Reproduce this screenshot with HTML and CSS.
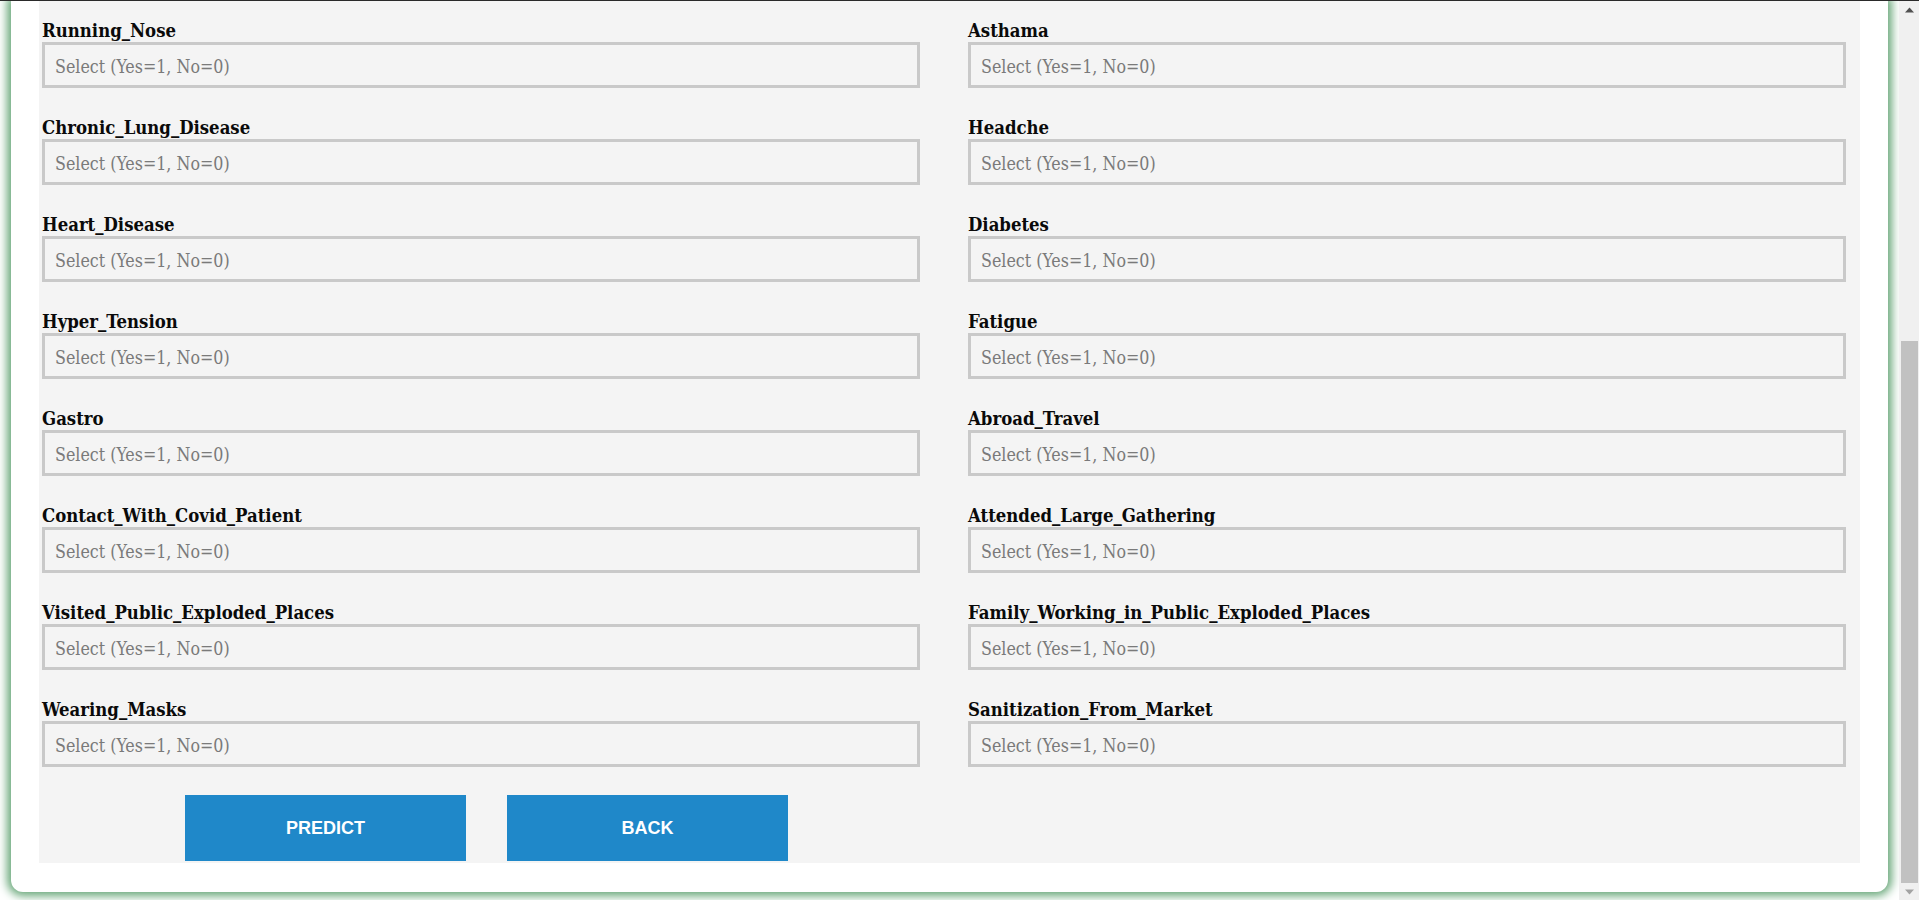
FILE: index.html
```html
<!DOCTYPE html>
<html>
<head>
<meta charset="utf-8">
<title>Covid Prediction</title>
<link rel="stylesheet" href="styles.css">
</head>
<body>
<div class="viewport">
  <div class="page">
    <div class="card">
      <form class="form">
        <div class="grid">
          <div class="field"><label>Running_Nose</label><input type="text" placeholder="Select (Yes=1, No=0)"></div>
          <div class="field"><label>Asthama</label><input type="text" placeholder="Select (Yes=1, No=0)"></div>
          <div class="field"><label>Chronic_Lung_Disease</label><input type="text" placeholder="Select (Yes=1, No=0)"></div>
          <div class="field"><label>Headche</label><input type="text" placeholder="Select (Yes=1, No=0)"></div>
          <div class="field"><label>Heart_Disease</label><input type="text" placeholder="Select (Yes=1, No=0)"></div>
          <div class="field"><label>Diabetes</label><input type="text" placeholder="Select (Yes=1, No=0)"></div>
          <div class="field"><label>Hyper_Tension</label><input type="text" placeholder="Select (Yes=1, No=0)"></div>
          <div class="field"><label>Fatigue</label><input type="text" placeholder="Select (Yes=1, No=0)"></div>
          <div class="field"><label>Gastro</label><input type="text" placeholder="Select (Yes=1, No=0)"></div>
          <div class="field"><label>Abroad_Travel</label><input type="text" placeholder="Select (Yes=1, No=0)"></div>
          <div class="field"><label>Contact_With_Covid_Patient</label><input type="text" placeholder="Select (Yes=1, No=0)"></div>
          <div class="field"><label>Attended_Large_Gathering</label><input type="text" placeholder="Select (Yes=1, No=0)"></div>
          <div class="field"><label>Visited_Public_Exploded_Places</label><input type="text" placeholder="Select (Yes=1, No=0)"></div>
          <div class="field"><label>Family_Working_in_Public_Exploded_Places</label><input type="text" placeholder="Select (Yes=1, No=0)"></div>
          <div class="field"><label>Wearing_Masks</label><input type="text" placeholder="Select (Yes=1, No=0)"></div>
          <div class="field"><label>Sanitization_From_Market</label><input type="text" placeholder="Select (Yes=1, No=0)"></div>
        </div>
        <div class="actions">
          <button type="button" class="btn">PREDICT</button>
          <button type="button" class="btn">BACK</button>
        </div>
      </form>
    </div>
  </div>
  <div class="scrollbar">
    <div class="sb-arrow">
      <svg width="9" height="6" viewBox="0 0 9 6"><path d="M0 5.5 L4.5 0.5 L9 5.5 Z" fill="#505050"/></svg>
    </div>
    <div class="sb-track"><div class="sb-thumb"></div></div>
    <div class="sb-arrow down">
      <svg width="9" height="6" viewBox="0 0 9 6"><path d="M0 0.5 L4.5 5.5 L9 0.5 Z" fill="#a3a3a3"/></svg>
    </div>
  </div>
</div>
</body>
</html>
```

FILE: styles.css
```css
html, body {
  margin: 0;
  padding: 0;
  height: 900px;
  overflow: hidden;
  background: #ffffff;
}

body {
  border-top: 1px solid #2a2a2a;
  box-sizing: border-box;
}

.viewport {
  display: flex;
  height: 899px;
}

.page {
  flex: 1;
  padding: 0 11px 8px 11px;
  display: flex;
  flex-direction: column;
  justify-content: flex-end;
  overflow: hidden;
}

.card {
  background: #ffffff;
  padding: 0 28px 29px 28px;
  border-radius: 0 0 12px 12px;
  box-shadow: 0 0 10px 4px #66a677;
}

.form {
  background: #f4f4f4;
  padding: 19px 14px 2px 3px;
  margin: 0;
}

.grid {
  display: grid;
  grid-template-columns: 878px 878px;
  column-gap: 48px;
  row-gap: 29px;
}

.field {
  display: flex;
  flex-direction: column;
}

.field label {
  font-family: "DejaVu Serif Condensed", "DejaVu Serif", serif;
  font-stretch: condensed;
  font-weight: bold;
  font-size: 18.4px;
  line-height: 22px;
  height: 22px;
  color: #0a0a0a;
  white-space: nowrap;
}

.field input {
  box-sizing: border-box;
  height: 46px;
  width: 100%;
  margin: 0;
  border: 3px solid #c9c9c9;
  background: #f4f4f4;
  padding: 4px 10px 0 10px;
  font-family: "DejaVu Serif Condensed", "DejaVu Serif", serif;
  font-stretch: condensed;
  font-size: 17.7px;
  color: #333;
  outline: none;
}

.field input::placeholder {
  color: #7a7a7a;
}

.actions {
  display: flex;
  gap: 41px;
  padding-left: 143px;
  margin-top: 28px;
}

.btn {
  width: 281px;
  height: 66px;
  background: #1f88c9;
  color: #ffffff;
  border: none;
  margin: 0;
  padding: 0;
  font-family: "Liberation Sans", Arial, sans-serif;
  font-weight: bold;
  font-size: 18px;
  cursor: pointer;
}

.scrollbar {
  width: 20px;
  background: #f0f0f0;
  display: flex;
  flex-direction: column;
}

.sb-arrow {
  height: 17px;
  display: flex;
  align-items: center;
  justify-content: center;
  padding-left: 1px;
}

.sb-track {
  flex: 1;
  display: flex;
  flex-direction: column;
  justify-content: flex-end;
  padding: 0 1px 0 2px;
}

.sb-thumb {
  height: 542px;
  background: #c1c1c1;
}
```
